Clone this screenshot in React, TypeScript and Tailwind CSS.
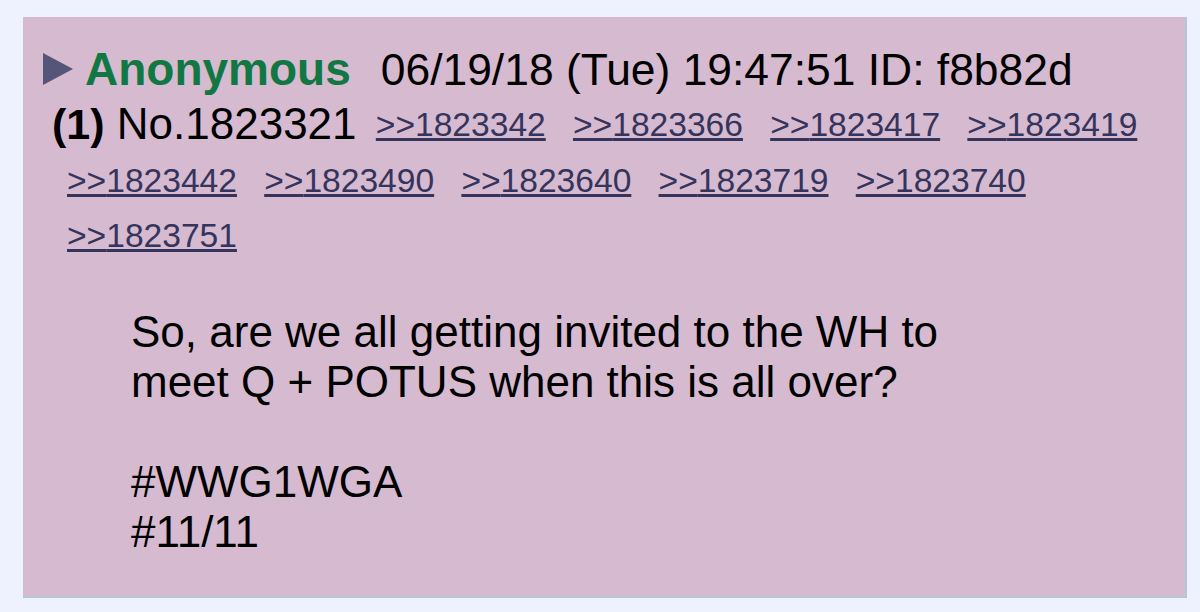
import React from "react";

const links1 = ["1823342", "1823366", "1823417", "1823419", "1823442", "1823490", "1823640", "1823719", "1823740", "1823751"];

export default function App() {
  return (
    <div
      className="w-[1200px] h-[612px] bg-[#eef2ff] pt-[17px] pl-[23px] overflow-hidden"
      style={{ fontFamily: "'Liberation Sans', Arial, Helvetica, sans-serif" }}
    >
      <div className="w-[1164px] h-[581px] bg-[#d6bad0] border-r-2 border-b-2 border-[#b7c5d9] pt-[26px] text-black">
        <div className="flex items-baseline h-[53px] leading-[53px] pl-[20px] text-[44px]">
          <svg width="30" height="32" viewBox="0 0 30 32" className="self-center mr-[12px] mt-[-2px]">
            <polygon points="0,0 30,16 0,32" fill="#55557a" />
          </svg>
          <span className="text-[#117743] font-bold text-[46px]">Anonymous</span>
          <span className="ml-[30px] text-[44.4px]">06/19/18 (Tue) 19:47:51 ID: f8b82d</span>
        </div>
        <div className="pl-[37px] pr-[20px] text-[44px] leading-[55px] indent-[-8px]">
          <span className="font-bold text-[43px]">(1)</span> No.1823321
          {links1.map((l) => (
            <React.Fragment key={l}>
              {" "}
              <a className="ml-[7px] mr-[8px] text-[33.6px] leading-none align-[3px] text-[#34345c] underline">
                &gt;&gt;{l}
              </a>
            </React.Fragment>
          ))}
        </div>
        <div className="mt-[45px] pl-[108px] text-[44px] leading-[50px]">
          So, are we all getting invited to the WH to
          <br />
          meet Q + POTUS when this is all over?
          <br />
          <br />
          #WWG1WGA
          <br />
          #11/11
        </div>
      </div>
    </div>
  );
}
